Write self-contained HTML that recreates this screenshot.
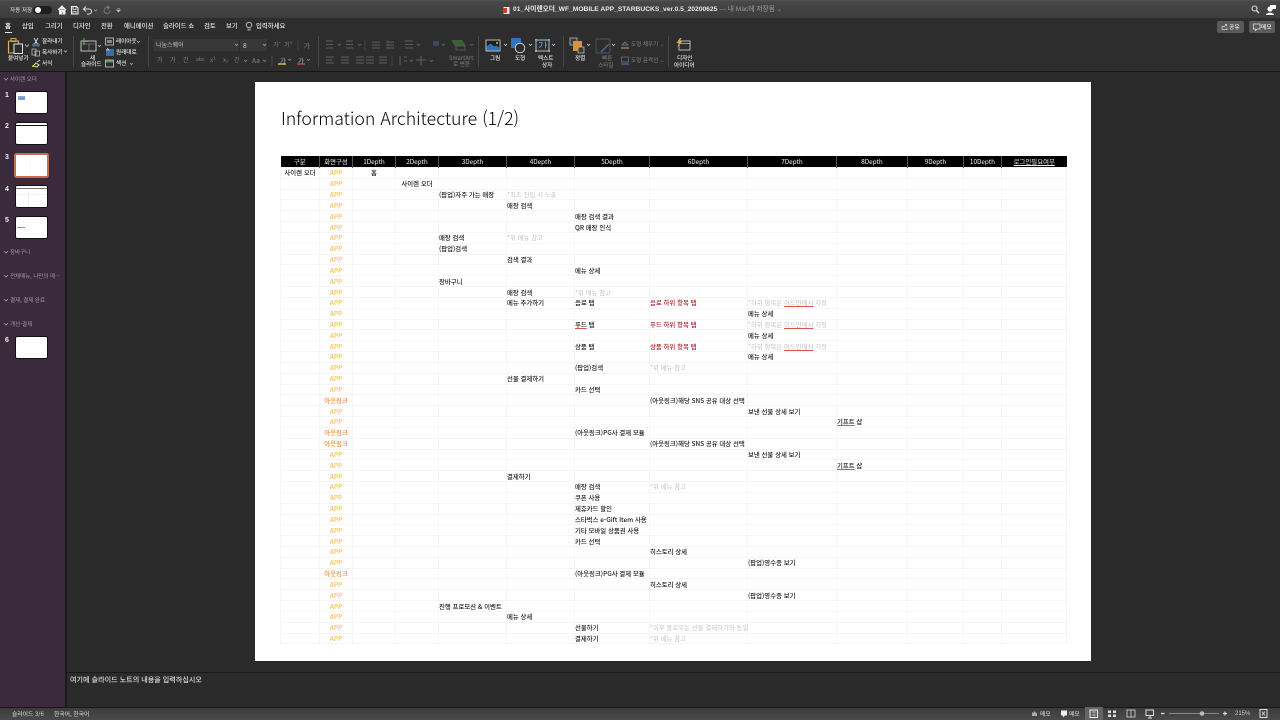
<!DOCTYPE html>
<html lang="ko"><head><meta charset="utf-8"><title>01_사이렌오더_WF</title>
<style>
*{box-sizing:border-box}
html,body{margin:0;padding:0;width:1280px;height:720px;overflow:hidden;background:#2a2a2a}
body{font-family:"Liberation Sans","Noto Sans CJK KR",sans-serif;position:relative}
.a{position:absolute}
.t{position:absolute;white-space:nowrap;line-height:10px;height:10px;font-size:6.5px;font-weight:500;color:#e2e2e2;font-family:"Noto Sans CJK KR",sans-serif}
.d{color:#747474}
.b{font-weight:700}
.th{background:#fff;border-radius:2.500px;border:1px solid #111;position:absolute;left:15px;width:33px;height:23px}
.n{position:absolute;left:5px;color:#f0f0f0;font-size:7px;font-weight:700;line-height:10px}
.s{position:absolute;left:10px;font-size:5.5px;font-weight:400;color:#a596a8;white-space:nowrap;line-height:8px;font-family:"Noto Sans CJK KR",sans-serif}
table{position:absolute;left:280px;top:156px;width:786px;border-collapse:collapse;table-layout:fixed;font-family:"Noto Sans CJK KR",sans-serif;font-size:6.4px;font-weight:500;color:#1a1a1a}
th{background:#000;color:#f2f2f2;font-weight:400;height:11px;padding:0;border-right:1px solid #555;line-height:11px;overflow:hidden}
th:last-child{border-right:0}
td{height:10.84px;padding:0;border:1px solid #f5f5f5;line-height:9px;white-space:nowrap;overflow:visible}
td.c{text-align:center}
.g{color:#c4c4c4;font-weight:400}.r{color:#b3242a}.o{color:#f6bf57;text-align:center}.l{color:#ee8f3c;text-align:center}
.w{text-decoration:underline solid #d9534f;text-decoration-thickness:.6px;text-underline-offset:1px}
</style></head><body>
<div class="a" style="left:0;top:0;width:1280px;height:18px;background:linear-gradient(#565656,#474747 10%,#3d3d3d)"></div>
<div class="a" style="left:0;top:18px;width:1280px;height:53px;background:#2d2d2d"></div>
<div class="a" style="left:0;top:71px;width:1280px;height:1px;background:#161616"></div>
<div class="a" style="left:0;top:72px;width:65px;height:635px;background:#3b2a3c"></div>
<div class="a" style="left:65px;top:72px;width:2px;height:635px;background:#1c1c1c"></div>
<div class="a" style="left:67px;top:672px;width:1213px;height:1px;background:#181818"></div>
<div class="a" style="left:0;top:707px;width:1280px;height:13px;background:linear-gradient(#3c3c3c,#4a4a4a);border-top:1px solid #191919"></div>

<span class="t" style="left:10px;top:5px;color:#ccc;font-size:5.6px">자동 저장</span>
<span class="t" style="left:513px;top:5px;color:#e8e8e8;font-size:6.7px;font-weight:700;font-family:'Liberation Sans','Noto Sans CJK KR',sans-serif">01_사이렌오더_WF_MOBILE APP_STARBUCKS_ver.0.5_20200625 <span style="color:#9a9a9a;font-weight:400">— 내 Mac에 저장됨 ⌄</span></span>

<span class="t" style="left:5px;top:21px;font-size:6.4px;color:#eee;font-weight:700">홈</span>
<div class="a" style="left:5px;top:32px;width:7px;height:1px;background:#eee"></div>
<span class="t" style="left:22px;top:21px;font-size:6.4px">삽입</span>
<span class="t" style="left:45px;top:21px;font-size:6.4px">그리기</span>
<span class="t" style="left:73px;top:21px;font-size:6.4px">디자인</span>
<span class="t" style="left:101px;top:21px;font-size:6.4px">전환</span>
<span class="t" style="left:124px;top:21px;font-size:6.4px">애니메이션</span>
<span class="t" style="left:163px;top:21px;font-size:6.4px">슬라이드 쇼</span>
<span class="t" style="left:204px;top:21px;font-size:6.4px">검토</span>
<span class="t" style="left:226px;top:21px;font-size:6.4px">보기</span>
<span class="t" style="left:256px;top:21px;font-size:6.4px">입력하세요</span>

<span class="t" style="left:8px;top:53px;font-size:5.6px">붙여넣기</span>
<span class="t" style="left:42px;top:36px;font-size:5.6px">잘라내기</span>
<span class="t" style="left:42px;top:47px;font-size:5.6px">복사하기</span>
<span class="t" style="left:42px;top:58px;font-size:5.6px">서식</span>
<span class="t" style="left:90px;top:53px;font-size:5.6px">새</span>
<span class="t" style="left:81px;top:59px;font-size:5.6px">슬라이드</span>
<span class="t" style="left:116px;top:36px;font-size:5.6px">레이아웃</span>
<span class="t" style="left:116px;top:47px;font-size:5.6px">원래대로</span>
<span class="t" style="left:116px;top:58px;font-size:5.6px">섹션</span>
<div class="a" style="left:153px;top:39px;width:86px;height:12px;background:#383838"></div>
<span class="t" style="left:156px;top:40px;font-size:6px;color:#a5a5a5">나눔스퀘어</span>
<div class="a" style="left:240px;top:39px;width:27px;height:12px;background:#383838"></div>
<span class="t" style="left:243px;top:40px;font-size:6.5px;color:#bbb">8</span>
<span class="t d" style="left:273px;top:40px;font-size:6px">가ˆ</span>
<span class="t d" style="left:284px;top:40px;font-size:6px">가ˇ</span>
<span class="t d" style="left:304px;top:40px;font-size:6.5px">가</span>
<span class="t d" style="left:157px;top:55px;font-size:6px">가</span>
<span class="t d" style="left:170px;top:55px;font-size:6px">가</span>
<span class="t d" style="left:183px;top:55px;font-size:6px">간</span>
<span class="t d" style="left:196px;top:55px;font-size:5px">abc</span>
<span class="t d" style="left:210px;top:55px;font-size:6px">x²</span>
<span class="t d" style="left:223px;top:55px;font-size:6px">x₂</span>
<span class="t d" style="left:234px;top:55px;font-size:6px">간</span>
<span class="t d" style="left:252px;top:55px;font-size:6.5px">Aa</span>
<span class="t" style="left:280px;top:55px;font-size:6.5px;color:#999">가</span>
<span class="t" style="left:298px;top:55px;font-size:6.5px;color:#999">가</span>

<span class="t d" style="left:449px;top:53px;font-size:5.6px">SmartArt</span>
<span class="t d" style="left:453px;top:59px;font-size:5.6px">로 변환</span>
<span class="t" style="left:490px;top:53px;font-size:5.6px">그림</span>
<span class="t" style="left:515px;top:53px;font-size:5.6px">도형</span>
<span class="t" style="left:538px;top:53px;font-size:5.6px">텍스트</span>
<span class="t" style="left:542px;top:60px;font-size:5.6px">상자</span>
<span class="t" style="left:575px;top:53px;font-size:5.6px">정렬</span>
<span class="t d" style="left:602px;top:53px;font-size:5.6px">빠른</span>
<span class="t d" style="left:598px;top:60px;font-size:5.6px">스타일</span>
<span class="t d" style="left:631px;top:39px;font-size:5.6px">도형 채우기 ⌄</span>
<span class="t d" style="left:631px;top:55px;font-size:5.6px">도형 윤곽선 ⌄</span>
<span class="t" style="left:677px;top:53px;font-size:5.6px">디자인</span>
<span class="t" style="left:674px;top:60px;font-size:5.6px">아이디어</span>

<div class="a" style="left:1217px;top:21px;width:27px;height:12px;background:#5a5a5a;border-radius:2px"></div>
<div class="a" style="left:1249px;top:21px;width:26px;height:12px;background:#5a5a5a;border-radius:2px"></div>
<span class="t" style="left:1229px;top:22px;font-size:5.8px;color:#e8e8e8">공유</span>
<span class="t" style="left:1261px;top:22px;font-size:5.8px;color:#e8e8e8">메모</span>

<svg class="a" style="left:0;top:0" width="1280" height="72" viewBox="0 0 1280 72" fill="none">
<!-- title bar -->
<rect x="33" y="6" width="19" height="8" rx="4" fill="#1d1d1d"/><circle cx="38" cy="10" r="3" fill="#fff"/>
<path d="M58 10l4-4 4 4M59.500 9.500V14h2v-2.500h1.500V14h2V9.500" stroke="#eee" fill="#eee" stroke-width="1"/>
<path d="M71.500 6.500h5l1.500 1.500v6h-6.500z" stroke="#eee" stroke-width="1.100"/><path d="M73 7v2.500h3V7M73 14v-2.500h3V14" stroke="#eee" stroke-width=".8"/>
<path d="M84 9h5a2.500 2.500 0 010 5h-2M86 6.500L83.500 9 86 11.500" stroke="#ddd" stroke-width="1.100"/><path d="M94 9.500l1.500 1.500L97 9.500" stroke="#999" stroke-width=".8"/>
<path d="M110 7.500h-3a3 3 0 103 3M107 5.500l2.500 2-2.500 2" stroke="#777" stroke-width="1"/>
<path d="M117 8.500h3M116.500 10l2 2 2-2z" fill="#bbb" stroke="#bbb" stroke-width=".6"/>
<rect x="503.500" y="7" width="6" height="7" fill="#eee"/><rect x="503" y="8" width="4" height="5" fill="#c8412a"/>
<!-- search / person -->
<circle cx="1254.500" cy="8.500" r="2.500" stroke="#ddd" stroke-width="1.100"/><path d="M1256.500 10.500l2.500 2.500" stroke="#ddd" stroke-width="1.300"/>
<circle cx="1270" cy="9" r="2.600" fill="#fff"/><path d="M1266 15c0-3 8-3 8 0z" fill="#fff"/><rect x="1270" y="5" width="6" height="4" fill="#fff"/>
<path d="M1222 29.500V26.500h2M1222 29.500h5v-2M1224 27l2.500-2.500M1225 24.500h1.700V26" stroke="#ddd" stroke-width=".7"/>
<path d="M1253.500 24h6.500v5h-3l-1.500 1.500V29h-2z" stroke="#ddd" stroke-width=".8"/>
<!-- bulb -->
<circle cx="249" cy="25" r="2.700" stroke="#ccc" stroke-width=".8"/><path d="M248 28.500v1.500h2v-1.500" stroke="#ccc" stroke-width=".8"/>
<!-- paste -->
<path d="M8.500 41h10v3M8.500 41v12h5" stroke="#e3b25c" stroke-width="1.100"/><rect x="11" y="38.500" width="5" height="3" stroke="#e3b25c" stroke-width=".9"/>
<rect x="14" y="44" width="8.500" height="9.500" stroke="#e2e2e2" stroke-width="1"/>
<path d="M25 44.500l2 2 2-2" stroke="#ccc" stroke-width=".8"/>
<path d="M34 38l3.500 6M38 38l-3.500 6" stroke="#ddd" stroke-width=".9"/><circle cx="34" cy="45" r="1.200" stroke="#7fa9d8" stroke-width=".7"/><circle cx="38" cy="45" r="1.200" stroke="#7fa9d8" stroke-width=".7"/>
<rect x="32" y="49" width="4" height="6" stroke="#ccc" stroke-width=".7"/><rect x="35" y="51" width="4.500" height="5" stroke="#ccc" stroke-width=".7"/>
<path d="M33 66l3-3 3 2-2 2zM37 62l3-2" stroke="#ddd" stroke-width="1"/><path d="M32 66.500h3" stroke="#e2b14f" stroke-width="1"/>
<path d="M64 50.500l1.500 1.500 1.500-1.500" stroke="#bbb" stroke-width=".8"/>
<!-- new slide -->
<rect x="81" y="41" width="15" height="10" stroke="#ccc" stroke-width=".9"/><path d="M81 44h15M89 44v7" stroke="#999" stroke-width=".6"/>
<path d="M84 38v7M80.500 41.500h7" stroke="#6fb35f" stroke-width="1"/>
<path d="M98 45l1.500 1.500L101 45" stroke="#bbb" stroke-width=".8"/>
<rect x="105.500" y="38" width="8" height="7" stroke="#ccc" stroke-width=".8"/><rect x="107" y="40" width="5" height="3" fill="#888"/>
<rect x="106" y="49" width="8" height="7" fill="#3a6ea8"/><path d="M106 50h3l-2-2" stroke="#ddd" stroke-width=".7"/>
<rect x="105.500" y="60" width="8" height="7" stroke="#ccc" stroke-width=".8"/><rect x="106" y="60.500" width="7" height="2" fill="#5b8f58"/>
<path d="M137 41l1.500 1.500L140 41M130 63l1.500 1.500 1.500-1.500M235 44l1.500 1.500 1.500-1.500M263 44l1.500 1.500 1.500-1.500" stroke="#aaa" stroke-width=".8"/>
<!-- separators -->
<path d="M73.500 36v31M148.500 36v31M318.500 36v31M478.500 36v31M563.500 36v31M668.500 36v31M272 56v10" stroke="#464646"/>
<path d="M298 40v10M365 40v10M388 40v10M392 56v10" stroke="#444"/>
<!-- color letters underline -->
<path d="M278 64h8" stroke="#e5c64a" stroke-width="1.400"/><path d="M297 64h8" stroke="#c94a44" stroke-width="1.400"/>
<path d="M288 59l1.500 1.500 1.500-1.500M307 59l1.500 1.500 1.500-1.500M244 60l1.500 1.500 1.500-1.500M263 60l1.500 1.500 1.500-1.500" stroke="#888" stroke-width=".8"/>
<!-- lists, disabled -->
<g stroke="#5f5f5f" stroke-width="1">
<path d="M326 41h7M326 44.500h7M326 48h7M346 41h7M346 44.500h7M346 48h7M372 42h8M372 45h8M372 48h8M386 42h8M386 45h8M386 48h8M405 41h8M405 44.500h8M405 48h8"/>
<path d="M326 57h8M326 60h6M326 63h8M341 57h8M341 60h8M341 63h8M356 57h8M356 60h8M356 63h8M366 57h8M366 60h8M366 63h8M379 57h8M379 60h8M379 63h8"/>
<path d="M400 56v9M404 57h3M404 61h3M421 56v9M416 60h10"/>
</g>
<path d="M338 44l1.500 1.500 1.500-1.500M358 44l1.500 1.500 1.500-1.500M417 44l1.500 1.500 1.500-1.500M410 60l1.500 1.500 1.500-1.500M430 60l1.500 1.500 1.500-1.500M442 44l1.500 1.500 1.500-1.500M470 44l1.500 1.500 1.500-1.500" stroke="#666" stroke-width=".8"/>
<rect x="433" y="41" width="6" height="5" fill="#3f4a5c"/>
<!-- smartart -->
<path d="M451 40h11l4 6h-11z" fill="#3d5f38"/><rect x="456" y="46" width="9" height="4" stroke="#666" stroke-width=".7"/>
<!-- picture -->
<rect x="486" y="40" width="14" height="11" fill="#1e1e1e" stroke="#ddd" stroke-width=".8"/><path d="M486.500 50.500v-4l4-3 4 3 2-1 3.500 3v2z" fill="#2f73bd"/><circle cx="497" cy="43" r="1" fill="#e7c24d"/>
<path d="M504 44l1.500 1.500 1.500-1.500M529 44l1.500 1.500 1.500-1.500M552 44l1.500 1.500 1.500-1.500M587 44l1.500 1.500 1.500-1.500M612 44l1.500 1.500 1.500-1.500" stroke="#ccc" stroke-width=".8"/>
<!-- shapes -->
<rect x="511" y="38" width="10" height="10" fill="#2f73bd"/><circle cx="520" cy="48" r="4.800" fill="#2d2d2d" stroke="#ddd" stroke-width=".9"/>
<!-- text box -->
<rect x="536" y="40" width="13" height="11" stroke="#ddd" stroke-width=".8"/><rect x="535" y="39" width="2" height="2" fill="#6fa9dd"/><rect x="548" y="39" width="2" height="2" fill="#6fa9dd"/><rect x="535" y="50" width="2" height="2" fill="#6fa9dd"/><rect x="548" y="50" width="2" height="2" fill="#6fa9dd"/>
<path d="M539 42.500h3c0 3-1 4-3 5M545.500 41.500v7M545.500 45h1.500" stroke="#6fa9dd" stroke-width=".8"/>
<!-- arrange -->
<rect x="570" y="38" width="7" height="7" fill="#3a3a3a" stroke="#bbb" stroke-width=".8"/><rect x="573" y="41" width="9" height="10" fill="#d9952f"/><rect x="578" y="47" width="6" height="6" fill="#3a3a3a" stroke="#bbb" stroke-width=".8"/>
<!-- quick style -->
<rect x="596" y="39" width="14" height="14" rx="1" stroke="#555" stroke-width=".9"/><path d="M601 52l8-8" stroke="#4a6f95" stroke-width="1.400"/>
<!-- fill / outline -->
<path d="M622 45l3-3 3 3h-6z" stroke="#888" stroke-width=".7"/><path d="M621 48h8" stroke="#b5853f" stroke-width="1.300"/>
<rect x="621.500" y="57" width="7" height="5" stroke="#777" stroke-width=".7"/><path d="M621 64h8" stroke="#3f6ea3" stroke-width="1.300"/>
<!-- design ideas -->
<rect x="679" y="41" width="11" height="9" stroke="#ccc" stroke-width=".9"/><path d="M679 43.500h11" stroke="#ccc" stroke-width=".7"/><path d="M680 38l-3.500 5h2.500l-2 4.500 5-6h-2.500l2-3.500z" fill="#e4a93c"/>
</svg>

<!-- sidebar -->
<svg class="a" style="left:0;top:72px" width="12" height="260" viewBox="0 0 12 260" fill="none"><path d="M4 6l2 2 2-2M4 179l2 2 2-2M4 203l2 2 2-2M4 227l2 2 2-2M4 251l2 2 2-2" stroke="#a596a8" stroke-width=".8"/></svg>
<span class="s" style="top:75px">사이렌 오더</span>
<span class="s" style="top:248px">장바구니</span>
<span class="s" style="top:272px">전체메뉴, 나만의 메···</span>
<span class="s" style="top:296px">결제, 결제 완료</span>
<span class="s" style="top:320px">개선-결제</span>
<span class="n" style="top:91px">1</span><span class="n" style="top:122px">2</span><span class="n" style="top:153px">3</span><span class="n" style="top:185px">4</span><span class="n" style="top:216px">5</span><span class="n" style="top:336px">6</span>
<div class="th" style="top:91px"><div class="a" style="left:2px;top:4px;width:7px;height:4px;background:#8aa6d8"></div><div class="a" style="left:3px;top:6px;width:6px;height:1px;background:#5d86c9"></div></div>
<div class="th" style="top:122px"><div class="a" style="left:0;top:2px;width:31px;height:1px;background:#111"></div></div>
<div class="th" style="top:153px;left:14px;width:35px;height:25px;border:2px solid #c66f50"><div class="a" style="left:14px;top:0;width:1px;height:21px;background:#f6f6f6"></div></div>
<div class="th" style="top:185px"><div class="a" style="left:0;top:2px;width:31px;height:1px;background:#777"></div><div class="a" style="left:0;top:8px;width:31px;height:1px;background:#f2f2f2"></div><div class="a" style="left:12px;top:3px;width:1px;height:18px;background:#f2f2f2"></div></div>
<div class="th" style="top:216px"><div class="a" style="left:1px;top:10px;width:8px;height:1px;background:#999"></div></div>
<div class="th" style="top:336px"></div>

<!-- slide -->
<div class="a" style="left:255px;top:82px;width:836px;height:579px;background:#fff"></div>
<div class="a" style="left:281px;top:106px;font-family:'Noto Sans CJK KR',sans-serif;font-weight:300;font-size:17.700px;line-height:24px;color:#000;white-space:nowrap">Information Architecture (1/2)</div>

<table>
<colgroup><col style="width:39px"><col style="width:33px"><col style="width:43px"><col style="width:43px"><col style="width:68px"><col style="width:68px"><col style="width:75px"><col style="width:98px"><col style="width:89px"><col style="width:71px"><col style="width:56px"><col style="width:38px"><col style="width:65px"></colgroup>
<thead><tr><th>구분</th><th>화면구성</th><th>1Depth</th><th>2Depth</th><th>3Depth</th><th>4Depth</th><th>5Depth</th><th>6Depth</th><th>7Depth</th><th>8Depth</th><th>9Depth</th><th>10Depth</th><th><u>로그인필요여부</u></th></tr></thead>
<tbody>
<tr><td class="c">사이렌 오더</td><td class="o">APP</td><td class="c">홈</td><td></td><td></td><td></td><td></td><td></td><td></td><td></td><td></td><td></td><td></td></tr>
<tr><td></td><td class="o">APP</td><td></td><td class="c">사이렌 오더</td><td></td><td></td><td></td><td></td><td></td><td></td><td></td><td></td><td></td></tr>
<tr><td></td><td class="o">APP</td><td></td><td></td><td>(팝업)자주 가는 매장</td><td class="g">*최초 진입 시 노출</td><td></td><td></td><td></td><td></td><td></td><td></td><td></td></tr>
<tr><td></td><td class="o">APP</td><td></td><td></td><td></td><td>매장 검색</td><td></td><td></td><td></td><td></td><td></td><td></td><td></td></tr>
<tr><td></td><td class="o">APP</td><td></td><td></td><td></td><td></td><td>매장 검색 결과</td><td></td><td></td><td></td><td></td><td></td><td></td></tr>
<tr><td></td><td class="o">APP</td><td></td><td></td><td></td><td></td><td>QR 매장 인식</td><td></td><td></td><td></td><td></td><td></td><td></td></tr>
<tr><td></td><td class="o">APP</td><td></td><td></td><td>매장 검색</td><td class="g">*위 메뉴 참고</td><td></td><td></td><td></td><td></td><td></td><td></td><td></td></tr>
<tr><td></td><td class="o">APP</td><td></td><td></td><td>(팝업)검색</td><td></td><td></td><td></td><td></td><td></td><td></td><td></td><td></td></tr>
<tr><td></td><td class="o">APP</td><td></td><td></td><td></td><td>검색 결과</td><td></td><td></td><td></td><td></td><td></td><td></td><td></td></tr>
<tr><td></td><td class="o">APP</td><td></td><td></td><td></td><td></td><td>메뉴 상세</td><td></td><td></td><td></td><td></td><td></td><td></td></tr>
<tr><td></td><td class="o">APP</td><td></td><td></td><td>장바구니</td><td></td><td></td><td></td><td></td><td></td><td></td><td></td><td></td></tr>
<tr><td></td><td class="o">APP</td><td></td><td></td><td></td><td>매장 검색</td><td class="g">*위 메뉴 참고</td><td></td><td></td><td></td><td></td><td></td><td></td></tr>
<tr><td></td><td class="o">APP</td><td></td><td></td><td></td><td>메뉴 추가하기</td><td>음료 탭</td><td class="r">음료 하위 항목 탭</td><td class="g">*하위 항목은 <span class="w">어드민에서</span> 지정</td><td></td><td></td><td></td><td></td></tr>
<tr><td></td><td class="o">APP</td><td></td><td></td><td></td><td></td><td></td><td></td><td>메뉴 상세</td><td></td><td></td><td></td><td></td></tr>
<tr><td></td><td class="o">APP</td><td></td><td></td><td></td><td></td><td><span class="w">푸드</span> 탭</td><td class="r">푸드 하위 항목 탭</td><td class="g">*하위 항목은 <span class="w">어드민에서</span> 지정</td><td></td><td></td><td></td><td></td></tr>
<tr><td></td><td class="o">APP</td><td></td><td></td><td></td><td></td><td></td><td></td><td>메뉴 상세</td><td></td><td></td><td></td><td></td></tr>
<tr><td></td><td class="o">APP</td><td></td><td></td><td></td><td></td><td>상품 탭</td><td class="r">상품 하위 항목 탭</td><td class="g">*하위 항목은 <span class="w">어드민에서</span> 지정</td><td></td><td></td><td></td><td></td></tr>
<tr><td></td><td class="o">APP</td><td></td><td></td><td></td><td></td><td></td><td></td><td>메뉴 상세</td><td></td><td></td><td></td><td></td></tr>
<tr><td></td><td class="o">APP</td><td></td><td></td><td></td><td></td><td>(팝업)검색</td><td class="g">*위 메뉴 참고</td><td></td><td></td><td></td><td></td><td></td></tr>
<tr><td></td><td class="o">APP</td><td></td><td></td><td></td><td>선물 결제하기</td><td></td><td></td><td></td><td></td><td></td><td></td><td></td></tr>
<tr><td></td><td class="o">APP</td><td></td><td></td><td></td><td></td><td>카드 선택</td><td></td><td></td><td></td><td></td><td></td><td></td></tr>
<tr><td></td><td class="l">아웃링크</td><td></td><td></td><td></td><td></td><td></td><td>(아웃링크)해당 SNS 공유 대상 선택</td><td></td><td></td><td></td><td></td><td></td></tr>
<tr><td></td><td class="o">APP</td><td></td><td></td><td></td><td></td><td></td><td></td><td>보낸 선물 상세 보기</td><td></td><td></td><td></td><td></td></tr>
<tr><td></td><td class="o">APP</td><td></td><td></td><td></td><td></td><td></td><td></td><td></td><td><span class="w">기프트</span> 샵</td><td></td><td></td><td></td></tr>
<tr><td></td><td class="l">아웃링크</td><td></td><td></td><td></td><td></td><td>(아웃링크)PG사 결제 모듈</td><td></td><td></td><td></td><td></td><td></td><td></td></tr>
<tr><td></td><td class="l">아웃링크</td><td></td><td></td><td></td><td></td><td></td><td>(아웃링크)해당 SNS 공유 대상 선택</td><td></td><td></td><td></td><td></td><td></td></tr>
<tr><td></td><td class="o">APP</td><td></td><td></td><td></td><td></td><td></td><td></td><td>보낸 선물 상세 보기</td><td></td><td></td><td></td><td></td></tr>
<tr><td></td><td class="o">APP</td><td></td><td></td><td></td><td></td><td></td><td></td><td></td><td><span class="w">기프트</span> 샵</td><td></td><td></td><td></td></tr>
<tr><td></td><td class="o">APP</td><td></td><td></td><td></td><td>결제하기</td><td></td><td></td><td></td><td></td><td></td><td></td><td></td></tr>
<tr><td></td><td class="o">APP</td><td></td><td></td><td></td><td></td><td>매장 검색</td><td class="g">*위 메뉴 참고</td><td></td><td></td><td></td><td></td><td></td></tr>
<tr><td></td><td class="o">APP</td><td></td><td></td><td></td><td></td><td>쿠폰 사용</td><td></td><td></td><td></td><td></td><td></td><td></td></tr>
<tr><td></td><td class="o">APP</td><td></td><td></td><td></td><td></td><td>제휴카드 할인</td><td></td><td></td><td></td><td></td><td></td><td></td></tr>
<tr><td></td><td class="o">APP</td><td></td><td></td><td></td><td></td><td>스타벅스 e-Gift Item 사용</td><td></td><td></td><td></td><td></td><td></td><td></td></tr>
<tr><td></td><td class="o">APP</td><td></td><td></td><td></td><td></td><td>기타 모바일 상품권 사용</td><td></td><td></td><td></td><td></td><td></td><td></td></tr>
<tr><td></td><td class="o">APP</td><td></td><td></td><td></td><td></td><td>카드 선택</td><td></td><td></td><td></td><td></td><td></td><td></td></tr>
<tr><td></td><td class="o">APP</td><td></td><td></td><td></td><td></td><td></td><td>히스토리 상세</td><td></td><td></td><td></td><td></td><td></td></tr>
<tr><td></td><td class="o">APP</td><td></td><td></td><td></td><td></td><td></td><td></td><td>(팝업)영수증 보기</td><td></td><td></td><td></td><td></td></tr>
<tr><td></td><td class="l">아웃링크</td><td></td><td></td><td></td><td></td><td>(아웃링크)PG사 결제 모듈</td><td></td><td></td><td></td><td></td><td></td><td></td></tr>
<tr><td></td><td class="o">APP</td><td></td><td></td><td></td><td></td><td></td><td>히스토리 상세</td><td></td><td></td><td></td><td></td><td></td></tr>
<tr><td></td><td class="o">APP</td><td></td><td></td><td></td><td></td><td></td><td></td><td>(팝업)영수증 보기</td><td></td><td></td><td></td><td></td></tr>
<tr><td></td><td class="o">APP</td><td></td><td></td><td>진행 프로모션 &amp; 이벤트</td><td></td><td></td><td></td><td></td><td></td><td></td><td></td><td></td></tr>
<tr><td></td><td class="o">APP</td><td></td><td></td><td></td><td>메뉴 상세</td><td></td><td></td><td></td><td></td><td></td><td></td><td></td></tr>
<tr><td></td><td class="o">APP</td><td></td><td></td><td></td><td></td><td>선물하기</td><td class="g">*이후 플로우는 선물 결제하기와 동일</td><td></td><td></td><td></td><td></td><td></td></tr>
<tr><td></td><td class="o">APP</td><td></td><td></td><td></td><td></td><td>결제하기</td><td class="g">*위 메뉴 참고</td><td></td><td></td><td></td><td></td><td></td></tr>
</tbody></table>

<!-- notes & status -->
<span class="t" style="left:70px;top:675px;font-size:7.100px;color:#dcdcdc">여기에 슬라이드 노트의 내용을 입력하십시오</span>
<span class="t" style="left:12px;top:709px;font-size:5.800px;color:#c4c4c4">슬라이드 3/6</span>
<span class="t" style="left:54px;top:709px;font-size:5.800px;color:#c4c4c4">한국어, 한국어</span>
<span class="t" style="left:1040px;top:709px;font-size:5.800px;color:#c8c8c8">메모</span>
<span class="t" style="left:1069px;top:709px;font-size:5.800px;color:#c8c8c8">메모</span>
<span class="t" style="left:1235px;top:709px;font-size:6px;color:#c8c8c8;font-family:'Liberation Sans',sans-serif">215%</span>
<svg class="a" style="left:980px;top:707px" width="300" height="13" viewBox="0 0 300 13" fill="none">
<path d="M52 9V5.500h2v-1.500l3 2.500v2.500z" fill="#aaa"/>
<rect x="81" y="3.500" width="6" height="5" fill="#eee"/><path d="M83 8.500v2l2-2" fill="#eee"/>
<rect x="105" y="0" width="18" height="13" fill="#646464"/>
<rect x="110" y="3" width="7.500" height="7.500" stroke="#eee" stroke-width="1"/><path d="M112.500 5h3M112.500 8h3" stroke="#eee" stroke-width=".8"/>
<path d="M128 3.500h3v2.500h-3zM133 3.500h3v2.500h-3zM128 7.500h3v2.500h-3zM133 7.500h3v2.500h-3z" fill="#ddd"/>
<rect x="147" y="3" width="8" height="7" stroke="#bbb" stroke-width="1"/><path d="M151 3v7" stroke="#bbb"/>
<rect x="166" y="3" width="7.500" height="5.500" stroke="#ddd" stroke-width="1"/><path d="M170 8.500v2.500M168 11h4" stroke="#ddd"/>
<path d="M181 6.500h3.500" stroke="#ddd" stroke-width="1.300"/>
<path d="M189 6.500h50" stroke="#888" stroke-width="1"/><circle cx="222" cy="6.500" r="2.300" fill="#bbb"/>
<path d="M243 6.500h4M245 4.500v4" stroke="#ddd" stroke-width="1.200"/>
<rect x="280" y="2.500" width="7" height="8" stroke="#ddd" stroke-width="1"/><path d="M282 4.500l3 4M285 4.500l-3 4" stroke="#ddd" stroke-width=".8"/>
</svg>
</body></html>
